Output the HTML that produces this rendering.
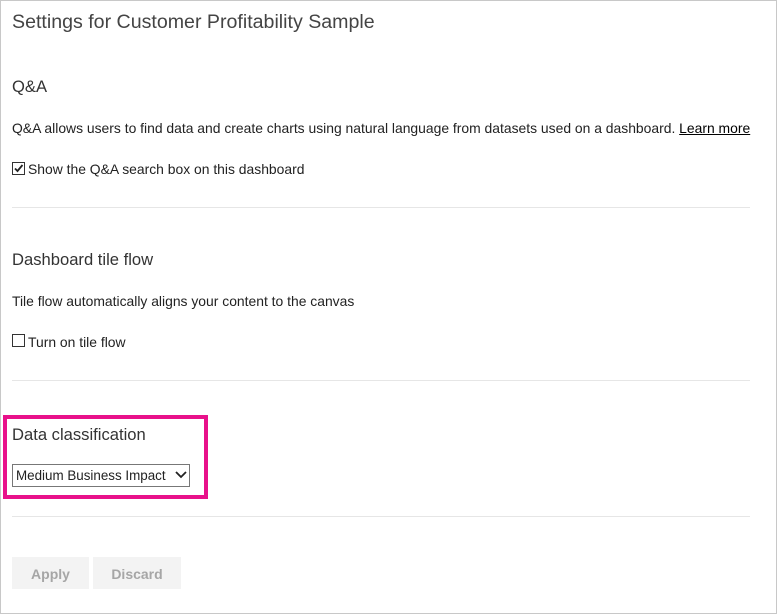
<!DOCTYPE html>
<html><head><style>
html,body{margin:0;padding:0;}
body{width:777px;height:614px;position:relative;background:#fff;font-family:"Liberation Sans",sans-serif;color:#222;overflow:hidden;}
.frame{position:absolute;left:0;top:0;width:775px;height:612px;border:1px solid #c8c8c8;}
.t{position:absolute;white-space:nowrap;}
.h1{font-size:19.6px;color:#444;left:12px;top:11px;}
.h2{font-size:16.6px;color:#333;left:12px;}
.p{font-size:13.9px;color:#222;}
.hr{position:absolute;left:12px;width:738px;height:1px;background:#e6e6e6;}
.cb{position:absolute;width:11px;height:11px;border:1px solid #333;background:#fff;}
.btn{position:absolute;top:557px;height:32px;background:#f3f3f3;color:#a6a6a6;font-size:14px;font-weight:bold;text-align:center;line-height:34px;}
</style></head><body>
<div class="frame"></div>
<div class="t h1">Settings for Customer Profitability Sample</div>
<div class="t h2" style="top:77px">Q&amp;A</div>
<div class="t p" style="left:12px;top:120px">Q&amp;A allows users to find data and create charts using natural language from datasets used on a dashboard. <span style="text-decoration:underline;color:#000">Learn more</span></div>
<div class="cb" style="left:12px;top:162px"><svg width="11" height="11" viewBox="0 0 11 11" style="position:absolute;left:0;top:0"><path d="M2 5.5 L4.5 8 L9.5 2" stroke="#222" stroke-width="1.8" fill="none"/></svg></div>
<div class="t p" style="left:28px;top:161px">Show the Q&amp;A search box on this dashboard</div>
<div class="hr" style="top:207px"></div>
<div class="t h2" style="top:250px">Dashboard tile flow</div>
<div class="t p" style="left:12px;top:293px">Tile flow automatically aligns your content to the canvas</div>
<div class="cb" style="left:12px;top:334px"></div>
<div class="t p" style="left:28px;top:334px">Turn on tile flow</div>
<div class="hr" style="top:380px"></div>
<div style="position:absolute;left:3px;top:415px;width:197px;height:76px;border:4px solid #e8118a;"></div>
<div class="t h2" style="top:425px">Data classification</div>
<div style="position:absolute;left:12px;top:464px;width:176px;height:21px;border:1px solid #777;background:#fff;">
<span class="t p" style="left:3px;top:3px;font-size:13.4px">Medium Business Impact</span>
<svg width="12" height="8" viewBox="0 0 12 8" style="position:absolute;left:162px;top:6px"><path d="M1 1 L6 6 L11 1" stroke="#222" stroke-width="1.8" fill="none"/></svg>
</div>
<div class="hr" style="top:516px"></div>
<div class="btn" style="left:12px;width:77px">Apply</div>
<div class="btn" style="left:93px;width:88px">Discard</div>
</body></html>
